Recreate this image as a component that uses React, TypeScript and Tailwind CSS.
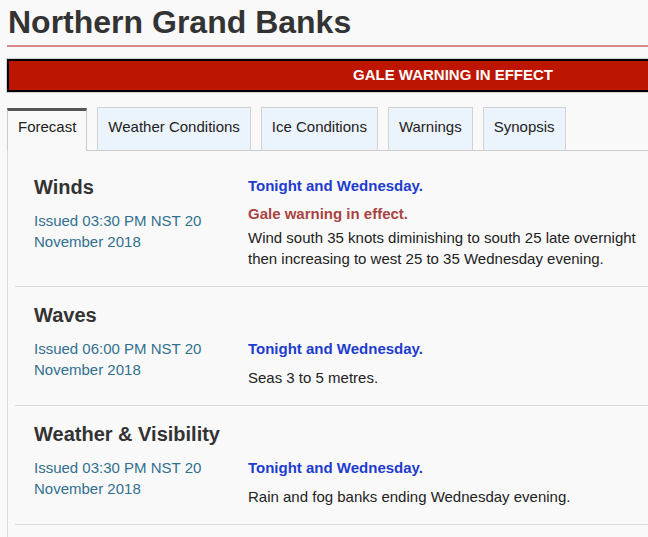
import React from 'react';

type Tab = { label: string; active?: boolean };

const tabs: Tab[] = [
  { label: 'Forecast', active: true },
  { label: 'Weather Conditions' },
  { label: 'Ice Conditions' },
  { label: 'Warnings' },
  { label: 'Synopsis' },
];

type Section = {
  title: string;
  issued: string;
  period: string;
  warning?: string;
  text: string;
};

const sections: Section[] = [
  {
    title: 'Winds',
    issued: 'Issued 03:30 PM NST 20 November 2018',
    period: 'Tonight and Wednesday.',
    warning: 'Gale warning in effect.',
    text: 'Wind south 35 knots diminishing to south 25 late overnight then increasing to west 25 to 35 Wednesday evening.',
  },
  {
    title: 'Waves',
    issued: 'Issued 06:00 PM NST 20 November 2018',
    period: 'Tonight and Wednesday.',
    text: 'Seas 3 to 5 metres.',
  },
  {
    title: 'Weather & Visibility',
    issued: 'Issued 03:30 PM NST 20 November 2018',
    period: 'Tonight and Wednesday.',
    text: 'Rain and fog banks ending Wednesday evening.',
  },
];

function Issued({ text }: { text: string }) {
  return <p className="w-[180px] text-[15px] leading-[21px] text-[#31708f]">{text}</p>;
}

function Heading({ text }: { text: string }) {
  return <h2 className="text-[20px] font-bold leading-[24px] text-[#333]">{text}</h2>;
}

function ForecastSection({ s, first }: { s: Section; first?: boolean }) {
  // first block: text column sits beside the heading
  if (first) {
    return (
      <div className="flex border-b border-[#dcdcdc] pb-[17px] pl-[19px] pt-[24px]">
        <div className="w-[214px] shrink-0">
          <div className="mb-[11px]">
            <Heading text={s.title} />
          </div>
          <Issued text={s.issued} />
        </div>
        <div className="w-[400px] text-[15px] leading-[21px]">
          <p className="font-bold text-[#1d3ccf]">{s.period}</p>
          {s.warning && <p className="mt-[7px] font-bold text-[#a94442]">{s.warning}</p>}
          <p className="mt-[3px] text-[#222]">{s.text}</p>
        </div>
      </div>
    );
  }

  return (
    <div className="border-b border-[#dcdcdc] pb-[17px] pl-[19px] pt-[16px]">
      <div className="mb-[11px]">
        <Heading text={s.title} />
      </div>
      <div className="flex">
        <div className="w-[214px] shrink-0">
          <Issued text={s.issued} />
        </div>
        <div className="w-[400px] text-[15px] leading-[21px]">
          <p className="font-bold text-[#1d3ccf]">{s.period}</p>
          <p className="mt-[8px] text-[#222]">{s.text}</p>
        </div>
      </div>
    </div>
  );
}

export default function App() {
  return (
    <div className="h-[537px] w-[648px] overflow-hidden bg-[#f9f9f9] font-['Liberation_Sans',Arial,sans-serif]">
      {/* page title */}
      <h1 className="ml-[7px] w-[700px] border-b-2 border-[#d9898b] pb-[5px] pl-[1px] pt-[4px] text-[32px] font-bold leading-[36px] text-[#333]">
        Northern Grand Banks
      </h1>

      {/* warning banner */}
      <div className="ml-[6px] mt-[11px] w-[894px] border border-[#cfcfcf]">
        <div className="flex h-[33px] items-center justify-center border-2 border-black bg-[#bd1500] text-[15px] font-bold text-white">
          GALE WARNING IN EFFECT
        </div>
      </div>

      {/* tabs */}
      <div className="ml-[7px] mt-[14px] flex items-end gap-[10px]">
        {tabs.map((t) =>
          t.active ? (
            <div
              key={t.label}
              className="relative z-10 -mb-px h-[43px] border-x border-t-[3px] border-x-[#cccccc] border-t-[#555] bg-[#f9f9f9] px-[10px] pb-[15px] pt-[7px] text-[15px] leading-[18px] text-[#222]"
            >
              {t.label}
            </div>
          ) : (
            <div
              key={t.label}
              className="h-[43px] border-x border-t border-[#d2d2d2] bg-[#ebf3fc] px-[10px] pb-[14px] pt-[10px] text-[15px] leading-[18px] text-[#222]"
            >
              {t.label}
            </div>
          )
        )}
      </div>

      {/* tab panel */}
      <div className="ml-[7px] h-[400px] border-l border-t border-l-[#dddddd] border-t-[#cccccc] pl-[7px]">
        {sections.map((s, i) => (
          <ForecastSection key={s.title} s={s} first={i === 0} />
        ))}
      </div>
    </div>
  );
}
